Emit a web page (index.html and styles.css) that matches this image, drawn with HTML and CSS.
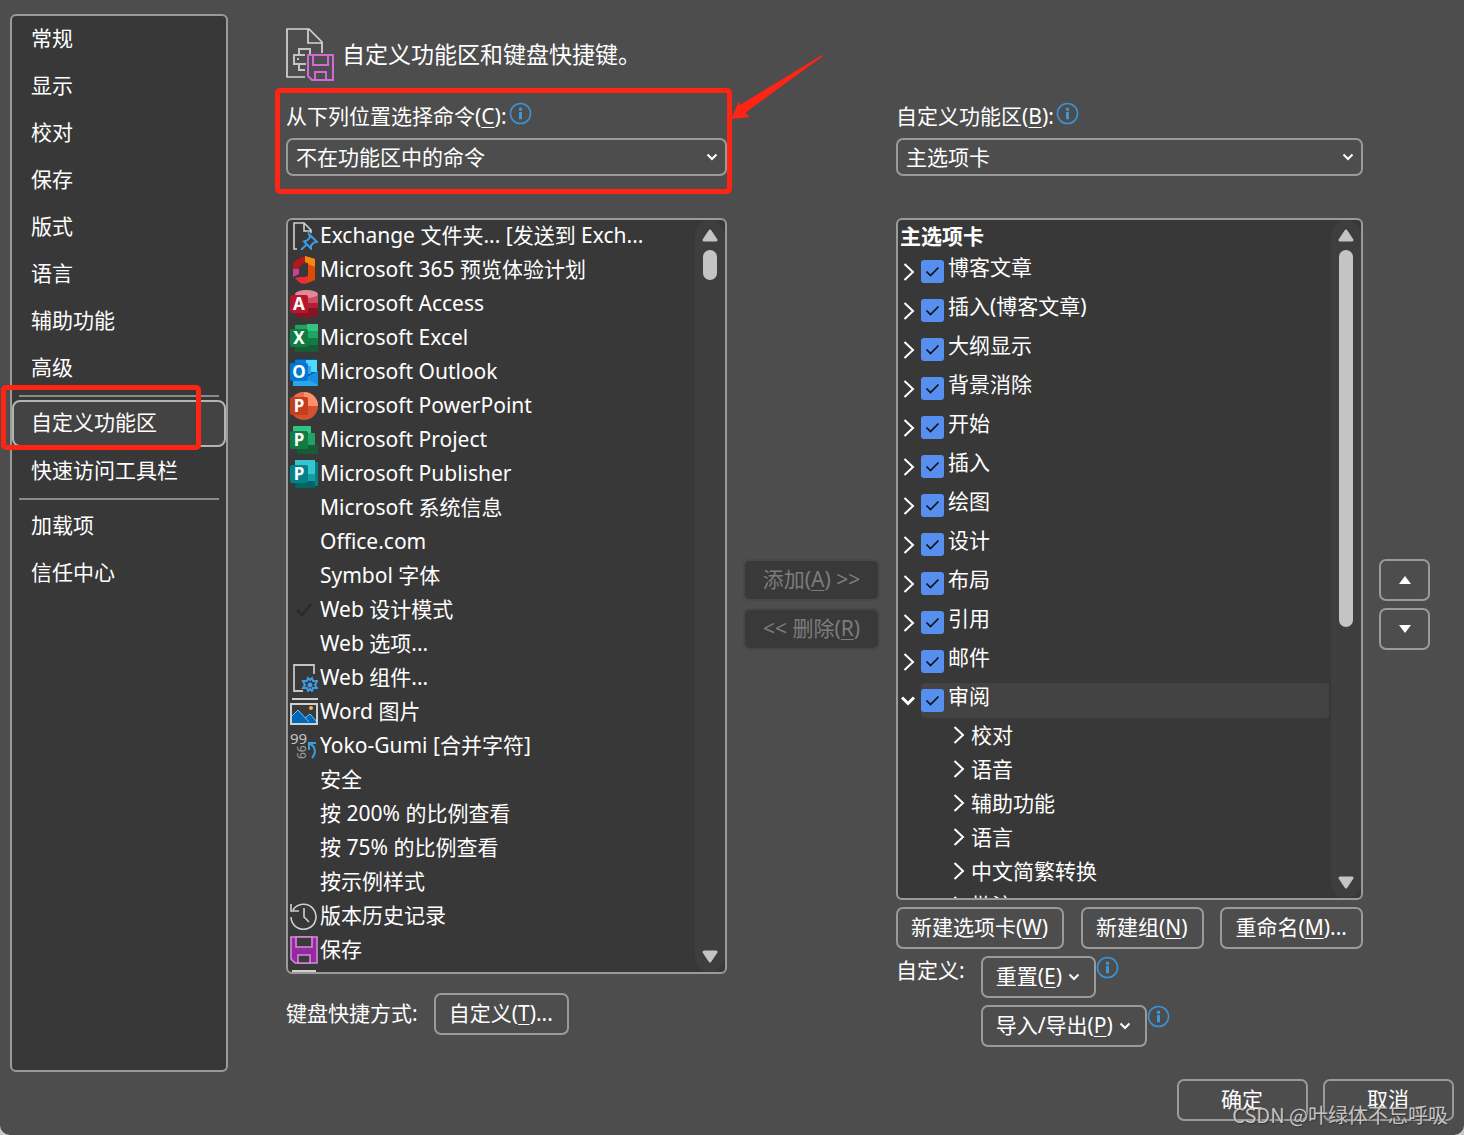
FILE: index.html
```html
<!DOCTYPE html>
<html lang="zh-CN">
<head>
<meta charset="utf-8">
<meta name="viewport" content="width=device-width, initial-scale=1">
<title>Word 选项</title>
<link rel="stylesheet" href="styles.css">
</head>
<body>
<svg class="defs" aria-hidden="true">
  <symbol id="right" viewBox="0 0 12 18"><path d="M1.5 1 10 9 1.5 17" fill="none" stroke="#fff" stroke-width="2"/></symbol>
  <symbol id="open" viewBox="0 0 14 10"><path d="M1 1.500 7 7.500 13 1.500" fill="none" stroke="#fff" stroke-width="3"/></symbol>
  <symbol id="down" viewBox="0 0 12 8"><path d="M1.500 1.500 6 6 10.500 1.500" fill="none" stroke="#fff" stroke-width="2"/></symbol>
  <symbol id="info" viewBox="0 0 24 24"><circle cx="12" cy="12" r="10.500" fill="none" stroke="#3b93d6" stroke-width="1.600"/><path d="M12 6v3M12 10.500v7.500" stroke="#3b9ce0" stroke-width="3"/></symbol>
  <symbol id="sb-up" viewBox="0 0 16 13"><path d="M8 2 14 11H2Z" fill="#c4c4c4" stroke="#c4c4c4" stroke-width="3" stroke-linejoin="round"/></symbol>
  <symbol id="sb-down" viewBox="0 0 16 13"><path d="M8 11 14 2H2Z" fill="#c4c4c4" stroke="#c4c4c4" stroke-width="3" stroke-linejoin="round"/></symbol>
</svg>
<div class="dialog">
  <div class="body">
    <nav class="sidebar" aria-label="选项类别">
      <button class="nav-item">常规</button>
      <button class="nav-item">显示</button>
      <button class="nav-item">校对</button>
      <button class="nav-item">保存</button>
      <button class="nav-item">版式</button>
      <button class="nav-item">语言</button>
      <button class="nav-item">辅助功能</button>
      <button class="nav-item">高级</button>
      <hr class="nav-rule">
      <div class="nav-marked">
        <button class="nav-item nav-item-active">自定义功能区</button>
        <span class="mark mark-nav"></span>
      </div>
      <button class="nav-item">快速访问工具栏</button>
      <hr class="nav-rule">
      <button class="nav-item">加载项</button>
      <button class="nav-item">信任中心</button>
    </nav>

    <main class="main">
      <header class="title">
        <svg class="title-icon" viewBox="0 0 48 54" aria-hidden="true">
          <path d="M19 49H1V1h22l13 13v11M22 1v14H36" fill="none" stroke="#d4d4d4" stroke-width="1.700"/>
          <path d="M19 42h-6v-5M20 36H8V27h5v-6h11v5M13 27h6" fill="none" stroke="#c4c4c4" stroke-width="2"/>
          <path d="M11 31h2" stroke="#c4c4c4" stroke-width="2"/>
          <path d="M22 27h25v25H26l-4-4Z" fill="#4d4d4d" stroke="#d26ad6" stroke-width="2"/>
          <path d="M27 27v10h15V27M29 52v-8h11v8" fill="none" stroke="#d26ad6" stroke-width="2"/>
        </svg>
        <h1 class="title-text">自定义功能区和键盘快捷键。</h1>
      </header>

      <div class="columns">
        <section class="column">
          <div class="field">
            <div class="field-label"><label for="source">从下列位置选择命令(<u>C</u>):</label><svg class="info" aria-hidden="true"><use href="#info"/></svg></div>
            <div class="select-wrap">
              <select id="source" class="select"><option>不在功能区中的命令</option></select>
              <svg class="caret" aria-hidden="true"><use href="#down"/></svg>
            </div>
            <span class="mark mark-field"></span>
            <svg class="arrow" viewBox="0 0 94 66" aria-hidden="true"><path d="M91 1 9 51 8 47 0 65 19 63 14 59 92 2Z" fill="#ff2414"/></svg>
          </div>
          <div class="listbox">
            <ul class="commands">
              <li class="command"><svg class="app" viewBox="0 0 28 28"><path d="M7 27H4V1h10l7 7v3M14 1v8h7" fill="none" stroke="#d0d0d0" stroke-width="1.600"/><path d="m19 12 8 8-3 .5-3 3 0 3-7-7 3-1 3-3ZM16.500 22.500 11 28" fill="none" stroke="#3b9ce0" stroke-width="2"/></svg><span class="command-name">Exchange 文件夹... [发送到 Exch...</span></li>
              <li class="command"><svg class="app" viewBox="0 0 28 28"><path d="M3 8 6 4 15 0l3 1v6l-6 1-3 3v7l-6 3Z" fill="#b8161c"/><path d="M3 13h6v5l-6 3Z" fill="#c8429a"/><path d="m15 0 10 3v21l-10 4V21l3-1V7l-3-1Z" fill="#e04a06"/><path d="m15 0 10 3v8l-7-3V7l-3-1Z" fill="#f28c0c"/><path d="m5 22 5-1h8v5l-4 2-4-1Z" fill="#f0283c"/></svg><span class="command-name">Microsoft 365 预览体验计划</span></li>
              <li class="command"><svg class="app" viewBox="0 0 28 28"><path d="M5 4v20c0 5 23 5 23 0V4Z" fill="#881421"/><path d="M5 4v14h23V4Z" fill="#b02035"/><path d="M5 4v9h23V4Z" fill="#ca5061"/><ellipse cx="16.500" cy="4" rx="11.500" ry="4" fill="#e38896"/><rect y="5" width="18" height="18" rx="2" fill="#b3182d"/><text class="glyph" x="9" y="20">A</text></svg><span class="command-name">Microsoft Access</span></li>
              <li class="command"><svg class="app" viewBox="0 0 28 28"><rect x="5" width="23" height="28" rx="1" fill="#185c37"/><path d="M5 1h12v20H5z" fill="#21a366"/><path d="M17 0h11v7H17z" fill="#33c481"/><path d="M17 7h11v7H17z" fill="#21a366"/><path d="M17 14h11v7H17z" fill="#107c41"/><rect y="5" width="18" height="18" rx="2" fill="#107c41"/><text class="glyph" x="9" y="20">X</text></svg><span class="command-name">Microsoft Excel</span></li>
              <li class="command"><svg class="app" viewBox="0 0 28 28"><rect x="5" y="1" width="22" height="20" fill="#0358a7"/><path d="M5 2h11v6H5z" fill="#0f78d4"/><path d="M16 2h11v12H16z" fill="#50d9ff"/><path d="M16 8h5v8h-5z" fill="#28a8ea"/><path d="m3 14 12 7 13-8v15H3Z" fill="#28a8ea"/><path d="m15 20 13-7v14Z" fill="#1490df"/><rect y="5" width="18" height="18" rx="2" fill="#0078d4"/><text class="glyph" x="9" y="20">O</text></svg><span class="command-name">Microsoft Outlook</span></li>
              <li class="command"><svg class="app" viewBox="0 0 28 28"><circle cx="14" cy="14" r="14" fill="#d35230"/><path d="M14 0v14H0A14 14 0 0 1 14 0Z" fill="#ed6c47"/><path d="M14 0v14h14A14 14 0 0 0 14 0Z" fill="#ff8f6b"/><rect y="5" width="18" height="18" rx="2" fill="#c43e1c"/><text class="glyph" x="9" y="20">P</text></svg><span class="command-name">Microsoft PowerPoint</span></li>
              <li class="command"><svg class="app" viewBox="0 0 28 28"><rect x="3" width="18" height="14" rx="1" fill="#33c481"/><rect x="14" y="7" width="11" height="14" rx="1" fill="#21a366"/><rect x="7" y="19" width="21" height="9" rx="1" fill="#185c37"/><rect y="5" width="18" height="18" rx="2" fill="#107c41"/><text class="glyph" x="9" y="20">P</text></svg><span class="command-name">Microsoft Project</span></li>
              <li class="command"><svg class="app" viewBox="0 0 28 28"><rect x="18" y="2" width="10" height="24" rx="1" fill="#038387"/><rect x="5" width="20" height="28" rx="1" fill="#026467"/><path d="M5 0h20v14H5z" fill="#37c6d0"/><path d="M16 14h9v7h-9z" fill="#1a9ba1"/><rect y="5" width="18" height="18" rx="2" fill="#038387"/><text class="glyph" x="9" y="20">P</text></svg><span class="command-name">Microsoft Publisher</span></li>
              <li class="command"><span class="app"></span><span class="command-name">Microsoft 系统信息</span></li>
              <li class="command"><span class="app"></span><span class="command-name">Office.com</span></li>
              <li class="command"><span class="app"></span><span class="command-name">Symbol 字体</span></li>
              <li class="command"><svg class="app" viewBox="0 0 28 28"><path d="m7 14 5 5L21 8" fill="none" stroke="#2a2a2a" stroke-width="2.500"/></svg><span class="command-name">Web 设计模式</span></li>
              <li class="command"><span class="app"></span><span class="command-name">Web 选项...</span></li>
              <li class="command"><svg class="app" viewBox="0 0 28 28"><path d="M13 27H4V1h20v9" fill="none" stroke="#c4c4c4" stroke-width="1.800"/><path d="m18 14 2 2 2-2 1 3h4l-2 4 2 3h-4l-1 3-2-2-2 2-1-3h-4l2-3-2-4h4Z" fill="none" stroke="#3b9ce0" stroke-width="2"/><circle cx="20" cy="21" r="2.500" fill="#3b9ce0"/></svg><span class="command-name">Web 组件...</span></li>
              <li class="command"><svg class="app" viewBox="0 0 28 28"><path d="M2 1h26" stroke="#d0d0d0" stroke-width="2"/><path d="M1 6h26v20H1Z" fill="#3a3a3a" stroke="#d0d0d0" stroke-width="2"/><path d="M2 18 8 12 15 19 21 16 26 22v3H2Z" fill="#0068b8"/><path d="m2 18 6-6 11 12M15 20l5-4 6 7" fill="none" stroke="#80bce8"/><circle cx="21" cy="10" r="2" fill="#ffb14d"/></svg><span class="command-name">Word 图片</span></li>
              <li class="command"><svg class="app" viewBox="0 0 28 28"><text class="digits" x="0" y="12">99</text><text class="digits-side" transform="translate(16 27) rotate(-90)">66</text><path d="M26 11h-7v7M19 11c6 3 8 9 3 15" fill="none" stroke="#3b9ce0" stroke-width="2"/></svg><span class="command-name">Yoko-Gumi [合并字符]</span></li>
              <li class="command"><span class="app"></span><span class="command-name">安全</span></li>
              <li class="command"><span class="app"></span><span class="command-name">按 200% 的比例查看</span></li>
              <li class="command"><span class="app"></span><span class="command-name">按 75% 的比例查看</span></li>
              <li class="command"><span class="app"></span><span class="command-name">按示例样式</span></li>
              <li class="command"><svg class="app" viewBox="0 0 28 28"><path d="M3 8a12.500 12.500 0 1 1-2 7M1 2v7h8M14 6v9l5 5" fill="none" stroke="#d0d0d0" stroke-width="1.600"/></svg><span class="command-name">版本历史记录</span></li>
              <li class="command"><svg class="app" viewBox="0 0 28 28"><path d="M1 1h26v26H5l-4-4Z" fill="#952aa0" stroke="#d58ad9" stroke-width="1.600"/><path d="M6 1v10h16V1ZM8 27v-8h12v8Z" fill="#3a3a3a" stroke="#d58ad9" stroke-width="1.600"/></svg><span class="command-name">保存</span></li>
              <li class="command"><svg class="app" viewBox="0 0 28 28"><path d="M3 1h22v26H3Z" fill="#777" stroke="#d0d0d0" stroke-width="2"/></svg></li>
            </ul>
            <div class="scrollbar"><svg class="sb-arrow"><use href="#sb-up"/></svg><div class="track"><div class="thumb thumb-short"></div></div><svg class="sb-arrow"><use href="#sb-down"/></svg></div>
          </div>
          <div class="shortcut">
            <span class="shortcut-label">键盘快捷方式:</span>
            <button class="btn">自定义(<u>T</u>)...</button>
          </div>
        </section>

        <div class="stack">
          <button class="btn btn-off" disabled>添加(<u>A</u>) &gt;&gt;</button>
          <button class="btn btn-off" disabled>&lt;&lt; 删除(<u>R</u>)</button>
        </div>

        <section class="column">
          <div class="field">
            <div class="field-label"><label for="target">自定义功能区(<u>B</u>):</label><svg class="info" aria-hidden="true"><use href="#info"/></svg></div>
            <div class="select-wrap">
              <select id="target" class="select"><option>主选项卡</option></select>
              <svg class="caret" aria-hidden="true"><use href="#down"/></svg>
            </div>
          </div>
          <div class="listbox">
            <div class="tree">
              <h2 class="tree-title">主选项卡</h2>
              <ul class="tabs">
                <li class="tab"><svg class="twist"><use href="#right"/></svg><label class="tab-label"><input class="check" type="checkbox" checked><span class="tab-name">博客文章</span></label></li>
                <li class="tab"><svg class="twist"><use href="#right"/></svg><label class="tab-label"><input class="check" type="checkbox" checked><span class="tab-name">插入(博客文章)</span></label></li>
                <li class="tab"><svg class="twist"><use href="#right"/></svg><label class="tab-label"><input class="check" type="checkbox" checked><span class="tab-name">大纲显示</span></label></li>
                <li class="tab"><svg class="twist"><use href="#right"/></svg><label class="tab-label"><input class="check" type="checkbox" checked><span class="tab-name">背景消除</span></label></li>
                <li class="tab"><svg class="twist"><use href="#right"/></svg><label class="tab-label"><input class="check" type="checkbox" checked><span class="tab-name">开始</span></label></li>
                <li class="tab"><svg class="twist"><use href="#right"/></svg><label class="tab-label"><input class="check" type="checkbox" checked><span class="tab-name">插入</span></label></li>
                <li class="tab"><svg class="twist"><use href="#right"/></svg><label class="tab-label"><input class="check" type="checkbox" checked><span class="tab-name">绘图</span></label></li>
                <li class="tab"><svg class="twist"><use href="#right"/></svg><label class="tab-label"><input class="check" type="checkbox" checked><span class="tab-name">设计</span></label></li>
                <li class="tab"><svg class="twist"><use href="#right"/></svg><label class="tab-label"><input class="check" type="checkbox" checked><span class="tab-name">布局</span></label></li>
                <li class="tab"><svg class="twist"><use href="#right"/></svg><label class="tab-label"><input class="check" type="checkbox" checked><span class="tab-name">引用</span></label></li>
                <li class="tab"><svg class="twist"><use href="#right"/></svg><label class="tab-label"><input class="check" type="checkbox" checked><span class="tab-name">邮件</span></label></li>
                <li class="tab"><svg class="twist twist-open"><use href="#open"/></svg><label class="tab-label tab-label-active"><input class="check" type="checkbox" checked><span class="tab-name">审阅</span></label></li>
              </ul>
              <ul class="groups">
                <li class="group"><svg class="twist"><use href="#right"/></svg><span>校对</span></li>
                <li class="group"><svg class="twist"><use href="#right"/></svg><span>语音</span></li>
                <li class="group"><svg class="twist"><use href="#right"/></svg><span>辅助功能</span></li>
                <li class="group"><svg class="twist"><use href="#right"/></svg><span>语言</span></li>
                <li class="group"><svg class="twist"><use href="#right"/></svg><span>中文简繁转换</span></li>
                <li class="group"><svg class="twist"><use href="#right"/></svg><span>批注</span></li>
              </ul>
            </div>
            <div class="scrollbar"><svg class="sb-arrow"><use href="#sb-up"/></svg><div class="track"><div class="thumb thumb-long"></div></div><svg class="sb-arrow"><use href="#sb-down"/></svg></div>
          </div>
          <div class="tab-actions">
            <button class="btn">新建选项卡(<u>W</u>)</button>
            <button class="btn">新建组(<u>N</u>)</button>
            <button class="btn">重命名(<u>M</u>)...</button>
          </div>
          <div class="custom">
            <span class="custom-label">自定义:</span>
            <div class="custom-actions">
              <div class="custom-row"><button class="btn">重置(<u>E</u>)<svg class="btn-caret"><use href="#down"/></svg></button><svg class="info"><use href="#info"/></svg></div>
              <div class="custom-row"><button class="btn">导入/导出(<u>P</u>)<svg class="btn-caret"><use href="#down"/></svg></button><svg class="info"><use href="#info"/></svg></div>
            </div>
          </div>
        </section>

        <div class="stack">
          <button class="btn btn-move" aria-label="上移"><svg class="move" viewBox="0 0 14 8"><path d="M7 0 13 8H1Z" fill="#fff"/></svg></button>
          <button class="btn btn-move" aria-label="下移"><svg class="move" viewBox="0 0 14 8"><path d="M7 8 13 0H1Z" fill="#fff"/></svg></button>
        </div>
      </div>
    </main>
  </div>
  <footer class="footer">
    <button class="btn btn-wide">确定</button>
    <button class="btn btn-wide">取消</button>
  </footer>
  <span class="watermark">CSDN @叶绿体不忘呼吸</span>
</div>
</body>
</html>
```
FILE: styles.css
```css
* {
  box-sizing: border-box;
}

body {
  margin: 0;
  background: #c8c8c8;
  color: #fff;
  font: 21px/34px "Noto Sans", "Noto Sans CJK SC", sans-serif;
}

button,
select {
  font: inherit;
  color: inherit;
}

ul {
  margin: 0;
  padding: 0;
  list-style: none;
}

u {
  text-decoration-thickness: 1px;
  text-underline-offset: 3px;
}

svg {
  flex: none;
}

.defs {
  position: absolute;
  width: 0;
  height: 0;
}

.dialog {
  position: relative;
  display: flex;
  flex-direction: column;
  height: 100vh;
  min-height: 760px;
  padding: 14px 10px;
  border-radius: 0 0 10px 10px;
  background: #4d4d4d;
}

.body {
  display: flex;
  flex: 1;
  gap: 58px;
  min-height: 0;
}

/* Category list */
.sidebar {
  flex: none;
  width: 218px;
  border: 2px solid #9a9a9a;
  border-radius: 6px;
  background: #383838;
}

.nav-item {
  display: block;
  width: 100%;
  height: 47px;
  padding: 0 17px 3px;
  border: 2px solid transparent;
  border-radius: 8px;
  background: none;
  text-align: left;
}

.nav-item-active {
  border-color: #b4b4b4;
  background: #434343;
}

.nav-rule {
  height: 2px;
  margin: 3px 7px;
  border: 0;
  background: #8a8a8a;
}

.nav-marked {
  position: relative;
  margin-bottom: 1px;
}

/* Red annotations */
.mark {
  position: absolute;
  border: 5px solid #ff2414;
  border-radius: 5px;
  pointer-events: none;
}

.mark-nav {
  inset: -15px 25px -3px -11px;
}

.mark-field {
  inset: -12px -5px -18px -11px;
}

.arrow {
  position: absolute;
  left: 100%;
  top: -46px;
  width: 94px;
  height: 66px;
  margin-left: 4px;
}

/* Main pane */
.main {
  display: flex;
  flex: 1;
  flex-direction: column;
  gap: 18px;
  min-width: 0;
  padding: 14px 24px 25px 0;
}

.title {
  display: flex;
  gap: 8px;
  height: 54px;
}

.title-icon {
  width: 48px;
  height: 54px;
}

.title-text {
  margin: 0;
  font-size: 23px;
  font-weight: 400;
  line-height: 52px;
}

.columns {
  display: grid;
  flex: 1;
  grid-template-columns: minmax(0, 441fr) 137px minmax(0, 467fr) 51px;
  column-gap: 16px;
  min-height: 0;
}

.column {
  display: flex;
  flex-direction: column;
  min-height: 0;
}

.field {
  position: relative;
  margin-bottom: 42px;
}

.field-label {
  display: flex;
  gap: 2px;
  height: 38px;
  line-height: 32px;
  white-space: nowrap;
}

.info {
  width: 23px;
  height: 23px;
}

.field-label .info {
  margin-top: 2px;
}

.select-wrap {
  display: grid;
  align-items: center;
}

.select {
  grid-area: 1 / 1;
  width: 100%;
  height: 38px;
  padding: 0 8px;
  border: 2px solid #9a9a9a;
  border-radius: 7px;
  background: #4d4d4d;
  appearance: none;
}

.caret {
  grid-area: 1 / 1;
  justify-self: end;
  width: 12px;
  height: 8px;
  margin-right: 9px;
  pointer-events: none;
}

.listbox {
  display: flex;
  flex: 1;
  min-height: 0;
  overflow: hidden;
  border: 2px solid #9a9a9a;
  border-radius: 6px;
  background: #383838;
}

.commands,
.tree {
  flex: 1;
  min-width: 0;
  white-space: nowrap;
}

.commands {
  margin-top: -1px;
}

.command {
  display: flex;
  gap: 2px;
  align-items: center;
  height: 34px;
  padding-left: 2px;
}

.command-name {
  padding-bottom: 2px;
}

.app {
  flex: none;
  width: 28px;
  height: 28px;
}

.glyph {
  fill: #fff;
  font-size: 17px;
  font-weight: 700;
  text-anchor: middle;
}

.digits {
  fill: #c4c4c4;
  font-size: 15px;
}

.digits-side {
  fill: #a0a0a0;
  font-size: 12px;
}

.scrollbar {
  display: flex;
  flex: none;
  flex-direction: column;
  gap: 8px;
  align-items: center;
  width: 30px;
  padding: 9px 0;
  border-radius: 15px;
  background: #3e3e3e;
}

.sb-arrow {
  width: 16px;
  height: 13px;
}

.track {
  flex: 1;
}

.thumb {
  width: 14px;
  border-radius: 7px;
  background: #c4c4c4;
}

.thumb-short {
  height: 30px;
}

.thumb-long {
  height: 61%;
}

.btn {
  height: 42px;
  padding: 0 14px 2px 13px;
  border: 2px solid #9a9a9a;
  border-radius: 7px;
  background: #4d4d4d;
  white-space: nowrap;
}

.btn-off {
  padding: 0 0 2px;
  border-color: #474747;
  background: #393939;
  color: #7c7c7c;
}

.btn-move {
  padding: 0;
}

.btn-wide {
  width: 131px;
}

.btn-caret {
  width: 12px;
  height: 8px;
  margin: 0 0 3px 6px;
}

.move {
  width: 14px;
  height: 8px;
  margin-bottom: 4px;
}

.shortcut {
  display: flex;
  gap: 16px;
  align-items: center;
  padding: 19px 0 12px;
}

.shortcut-label {
  padding-bottom: 2px;
}

.stack {
  display: flex;
  flex-direction: column;
  gap: 7px;
  justify-content: center;
  padding-top: 62px;
}

/* Ribbon tree */
.tree-title {
  margin: 0;
  padding: 0 2px 2px;
  font-size: 21px;
  font-weight: 700;
  line-height: 32px;
}

.tabs {
  display: grid;
  gap: 4px;
}

.tab {
  display: flex;
  gap: 5px;
  align-items: center;
  height: 35px;
  padding: 0 2px 0 5px;
}

.twist {
  width: 12px;
  height: 18px;
}

.twist-open {
  width: 14px;
  height: 10px;
  margin: 0 0 0 -2px;
}

.tab-label {
  display: flex;
  flex: 1;
  gap: 4px;
  align-items: center;
  height: 35px;
  margin-left: 1px;
  border-radius: 4px;
}

.tab-label-active {
  background: #434343;
}

.check {
  width: 23px;
  height: 23px;
  margin: 0;
  border-radius: 3px;
  background: #568fed url("data:image/svg+xml,%3Csvg xmlns='http://www.w3.org/2000/svg' viewBox='0 0 23 23'%3E%3Cpath d='M5.500 11.500l4 4 8-8' fill='none' stroke='%23111' stroke-width='1.700'/%3E%3C/svg%3E");
  appearance: none;
}

.tab-name {
  padding-bottom: 10px;
}

.group {
  display: flex;
  gap: 6px;
  align-items: center;
  padding-left: 55px;
}

.tab-actions {
  display: flex;
  justify-content: space-between;
  padding: 7px 0;
}

.custom {
  display: flex;
  gap: 16px;
}

.custom-label {
  line-height: 28px;
}

.custom-actions {
  display: grid;
  gap: 7px;
}

.custom-row {
  display: flex;
}

.footer {
  display: flex;
  gap: 15px;
  justify-content: flex-end;
  padding-top: 7px;
}

.watermark {
  position: absolute;
  right: 16px;
  bottom: 3px;
  color: #c4c4c4;
  font: 20px/34px "Noto Sans CJK SC", sans-serif;
  text-shadow: 1px 1px 1px #333;
  pointer-events: none;
}
```
